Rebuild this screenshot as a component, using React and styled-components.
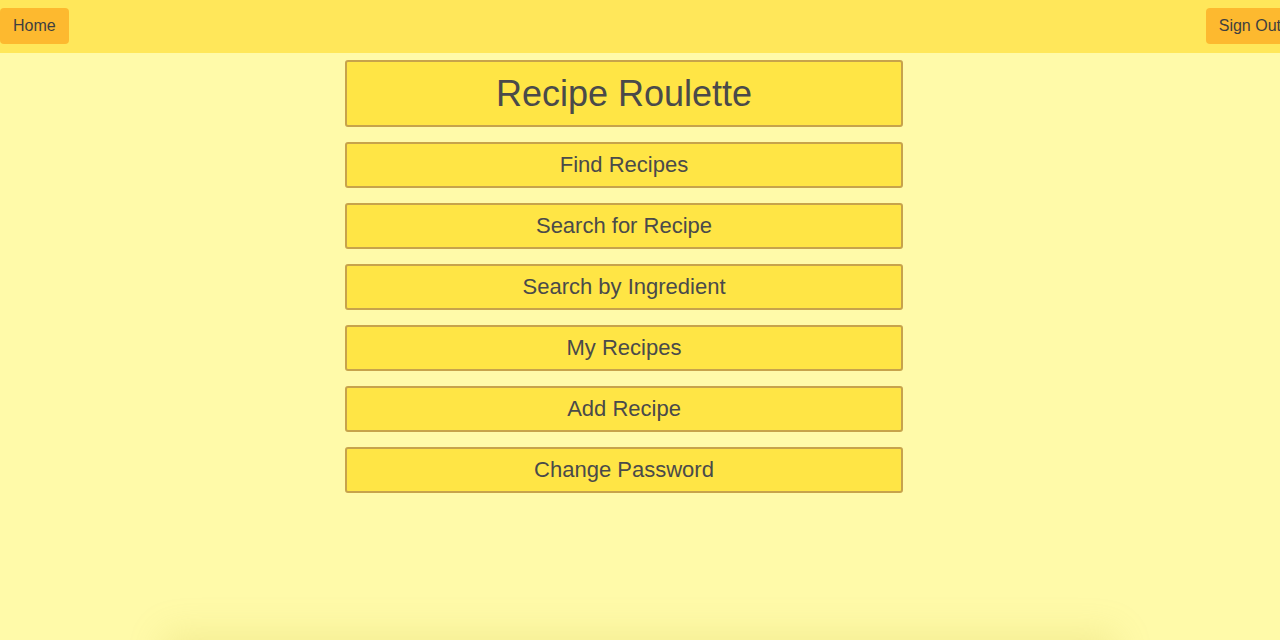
import React from "react";
import styled, { createGlobalStyle } from "styled-components";

const Global = createGlobalStyle`
  html, body {
    margin: 0;
    padding: 0;
    background: #fffaa9;
    overflow-x: hidden;
  }
  body {
    font-family: "Liberation Sans", Arial, sans-serif;
    color: #4a4a4a;
  }
`;

const NavBar = styled.nav`
  height: 53px;
  background: #ffe75a;
  display: flex;
  align-items: flex-start;
  justify-content: space-between;
  padding-top: 8px;
  box-sizing: border-box;
`;

const NavButton = styled.button`
  height: 36px;
  padding: 0 13px;
  border: none;
  border-radius: 4px;
  background: #fdb92f;
  color: #3f3f3f;
  font-family: "Liberation Sans", Arial, sans-serif;
  font-size: 16px;
  white-space: nowrap;
  cursor: pointer;
  margin-right: ${(p) => (p.$overflow ? "-14px" : "0")};
`;

const Main = styled.main`
  min-height: 587px;
  display: flex;
  flex-direction: column;
  align-items: center;
  padding-top: 7px;
  box-sizing: border-box;
`;

const Menu = styled.div`
  width: 558px;
  display: flex;
  flex-direction: column;
  gap: 15px;
  margin-left: -32px;
`;

const Title = styled.h1`
  margin: 0;
  height: 67px;
  box-sizing: border-box;
  border: 2px solid #c7a34b;
  border-radius: 3px;
  background: #ffe545;
  display: flex;
  align-items: center;
  justify-content: center;
  font-size: 36px;
  font-weight: normal;
  color: #4a4a4a;
`;

const MenuButton = styled.button`
  height: 46px;
  box-sizing: border-box;
  border: 2px solid #c7a34b;
  border-radius: 3px;
  background: #ffe545;
  color: #4a4a4a;
  font-family: "Liberation Sans", Arial, sans-serif;
  font-size: 22px;
  cursor: pointer;
`;

const Footer = styled.footer`
  width: 940px;
  height: 60px;
  margin: 0 auto;
  box-shadow: 0 0 36px 6px rgba(200, 190, 60, 0.22);
`;

const items = [
  "Find Recipes",
  "Search for Recipe",
  "Search by Ingredient",
  "My Recipes",
  "Add Recipe",
  "Change Password",
];

export default function App() {
  return (
    <>
      <Global />
      <NavBar>
        <NavButton>Home</NavButton>
        <NavButton $overflow>Sign Out</NavButton>
      </NavBar>
      <Main>
        <Menu>
          <Title>Recipe Roulette</Title>
          {items.map((t) => (
            <MenuButton key={t}>{t}</MenuButton>
          ))}
        </Menu>
      </Main>
      <Footer />
    </>
  );
}
